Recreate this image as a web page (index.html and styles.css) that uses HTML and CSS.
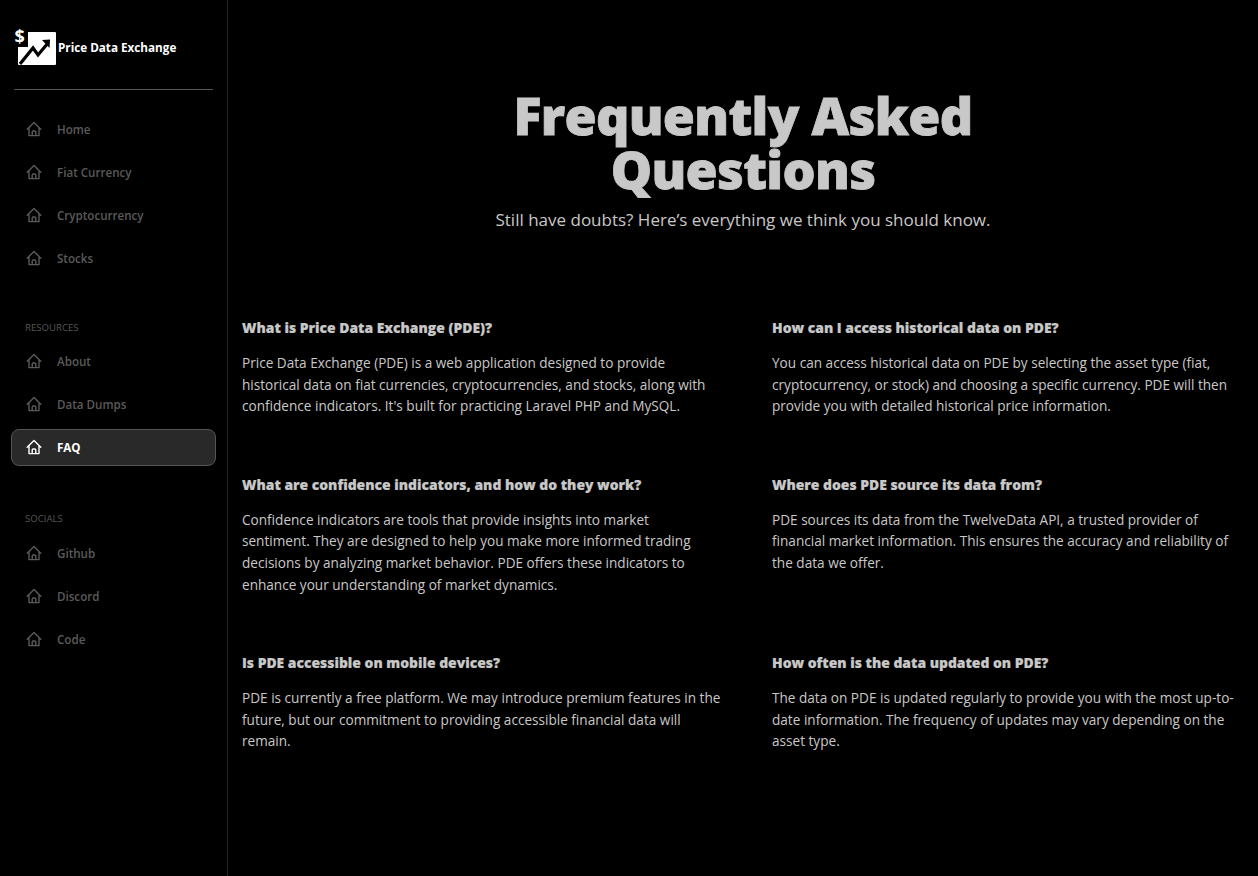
FILE: index.html
```html
<!DOCTYPE html>
<html lang="en">
<head>
    <meta charset="UTF-8">
    <meta name="viewport" content="width=device-width, initial-scale=1.0">
    <title>FAQ - Price Data Exchange</title>
    <link rel="stylesheet" href="styles.css">
</head>
<body>
    <svg class="icon-defs" width="0" height="0">
        <symbol id="house" viewBox="0 0 16 16">
            <path d="M1.2 8.2 L8 1.4 L14.8 8.2 M3 6.6 V14.6 H13 V6.6 M6.2 14.6 V11 Q6.2 10 7.2 10 H8.8 Q9.8 10 9.8 11 V14.6" fill="none" stroke="currentColor" stroke-width="1.4" stroke-linejoin="round" stroke-linecap="round"/>
        </symbol>
    </svg>

    <aside class="sidebar">
        <div class="brand">
            <svg class="brand-logo" width="44" height="44" viewBox="0 0 44 44">
                <path d="M14 7 H41 Q42 7 42 8 V39 Q42 40 41 40 H5 Q4 40 4 39 V22 H14 Z" fill="#fff"/>
                <path d="M6 39 L19 23 L24 30 L34 18" fill="none" stroke="#000" stroke-width="3.2"/>
                <path d="M28 15 L36 14.5 L35.5 23 Z" fill="#000"/>
                <text x="0.5" y="18" class="brand-dollar">$</text>
            </svg>
            <span class="brand-name">Price Data Exchange</span>
        </div>

        <nav class="nav-group">
            <a class="nav-item" href="#"><svg class="nav-icon"><use href="#house"/></svg>Home</a>
            <a class="nav-item" href="#"><svg class="nav-icon"><use href="#house"/></svg>Fiat Currency</a>
            <a class="nav-item" href="#"><svg class="nav-icon"><use href="#house"/></svg>Cryptocurrency</a>
            <a class="nav-item" href="#"><svg class="nav-icon"><use href="#house"/></svg>Stocks</a>
        </nav>

        <p class="nav-label">RESOURCES</p>
        <nav class="nav-group">
            <a class="nav-item" href="#"><svg class="nav-icon"><use href="#house"/></svg>About</a>
            <a class="nav-item" href="#"><svg class="nav-icon"><use href="#house"/></svg>Data Dumps</a>
            <a class="nav-item active" href="#"><svg class="nav-icon"><use href="#house"/></svg>FAQ</a>
        </nav>

        <p class="nav-label nav-label-socials">SOCIALS</p>
        <nav class="nav-group">
            <a class="nav-item" href="#"><svg class="nav-icon"><use href="#house"/></svg>Github</a>
            <a class="nav-item" href="#"><svg class="nav-icon"><use href="#house"/></svg>Discord</a>
            <a class="nav-item" href="#"><svg class="nav-icon"><use href="#house"/></svg>Code</a>
        </nav>
    </aside>

    <main class="content">
        <header class="faq-header">
            <h1>Frequently Asked Questions</h1>
            <p>Still have doubts? Here’s everything we think you should know.</p>
        </header>

        <section class="faq-grid">
            <article class="faq-item">
                <h3>What is Price Data Exchange (PDE)?</h3>
                <p>Price Data Exchange (PDE) is a web application designed to provide historical data on fiat currencies, cryptocurrencies, and stocks, along with confidence indicators. It's built for practicing Laravel PHP and MySQL.</p>
            </article>
            <article class="faq-item">
                <h3>How can I access historical data on PDE?</h3>
                <p>You can access historical data on PDE by selecting the asset type (fiat, cryptocurrency, or stock) and choosing a specific currency. PDE will then provide you with detailed historical price information.</p>
            </article>
            <article class="faq-item">
                <h3>What are confidence indicators, and how do they work?</h3>
                <p>Confidence indicators are tools that provide insights into market<br>sentiment. They are designed to help you make more informed trading decisions by analyzing market behavior. PDE offers these indicators to enhance your understanding of market dynamics.</p>
            </article>
            <article class="faq-item">
                <h3>Where does PDE source its data from?</h3>
                <p>PDE sources its data from the TwelveData API, a trusted provider of<br>financial market information. This ensures the accuracy and reliability of<br>the data we offer.</p>
            </article>
            <article class="faq-item">
                <h3>Is PDE accessible on mobile devices?</h3>
                <p>PDE is currently a free platform. We may introduce premium features in the future, but our commitment to providing accessible financial data will remain.</p>
            </article>
            <article class="faq-item">
                <h3>How often is the data updated on PDE?</h3>
                <p>The data on PDE is updated regularly to provide you with the most up-to-date information. The frequency of updates may vary depending on the asset type.</p>
            </article>
        </section>
    </main>
</body>
</html>
```

FILE: styles.css
```css
/* Basic Reset and Font */
* {
    margin: 0;
    padding: 0;
    box-sizing: border-box;
    font-family: "Open Sans", "Noto Sans", sans-serif;
}

body {
    background-color: #000;
    color: #c8c8c8;
    display: flex;
    min-height: 876px;
}

.icon-defs {
    position: absolute;
}

/* Sidebar */
.sidebar {
    width: 228px;
    flex-shrink: 0;
    border-right: 1px solid #222;
    padding: 0 11px;
}

.brand {
    height: 90px;
    margin: 0 3px 21px;
    border-bottom: 1px solid #555;
    display: flex;
    align-items: center;
}

.brand-logo {
    margin-top: 5px;
}

.brand-dollar {
    font-size: 18px;
    font-weight: 700;
    fill: #fff;
}

.brand-name {
    color: #fff;
    font-size: 11.7px;
    font-weight: 700;
    margin-top: 5px;
}

.nav-group {
    display: flex;
    flex-direction: column;
    gap: 6px;
}

.nav-item {
    height: 37px;
    display: flex;
    align-items: center;
    gap: 15px;
    padding-left: 14px;
    border: 1px solid transparent;
    border-radius: 8px;
    color: #5a5a5a;
    font-size: 11.6px;
    font-weight: 600;
    text-decoration: none;
}

.nav-icon {
    width: 16px;
    height: 16px;
    margin-top: -1px;
}

.nav-item.active {
    background-color: #292929;
    border-color: #555;
    color: #fff;
    font-weight: 700;
}

.nav-label {
    margin: 44px 0 8px 14px;
    height: 14px;
    line-height: 14px;
    font-size: 9.6px;
    color: #555;
}

.nav-label-socials {
    margin-top: 46px;
    margin-bottom: 9px;
}

/* Main content */
.content {
    flex: 1;
    min-width: 0;
    padding: 0 5px;
}

.faq-header {
    padding-top: 88px;
    margin-bottom: 84px;
    text-align: center;
}

.faq-header h1 {
    max-width: 520px;
    margin: 0 auto 10px;
    font-size: 52px;
    line-height: 54px;
    font-weight: 800;
    letter-spacing: -0.7px;
    -webkit-text-stroke: 0.8px #c8c8c8;
}

.faq-header p {
    font-size: 17px;
    line-height: 28px;
}

.faq-grid {
    display: grid;
    grid-template-columns: 481px 481px;
    column-gap: 49px;
    row-gap: 58px;
    margin-left: 9px;
}

.faq-item h3 {
    font-size: 13.9px;
    line-height: 20px;
    font-weight: 800;
    -webkit-text-stroke: 0.2px #c8c8c8;
    margin-bottom: 14px;
}

.faq-item p {
    font-size: 13.6px;
    line-height: 21.6px;
}
```
